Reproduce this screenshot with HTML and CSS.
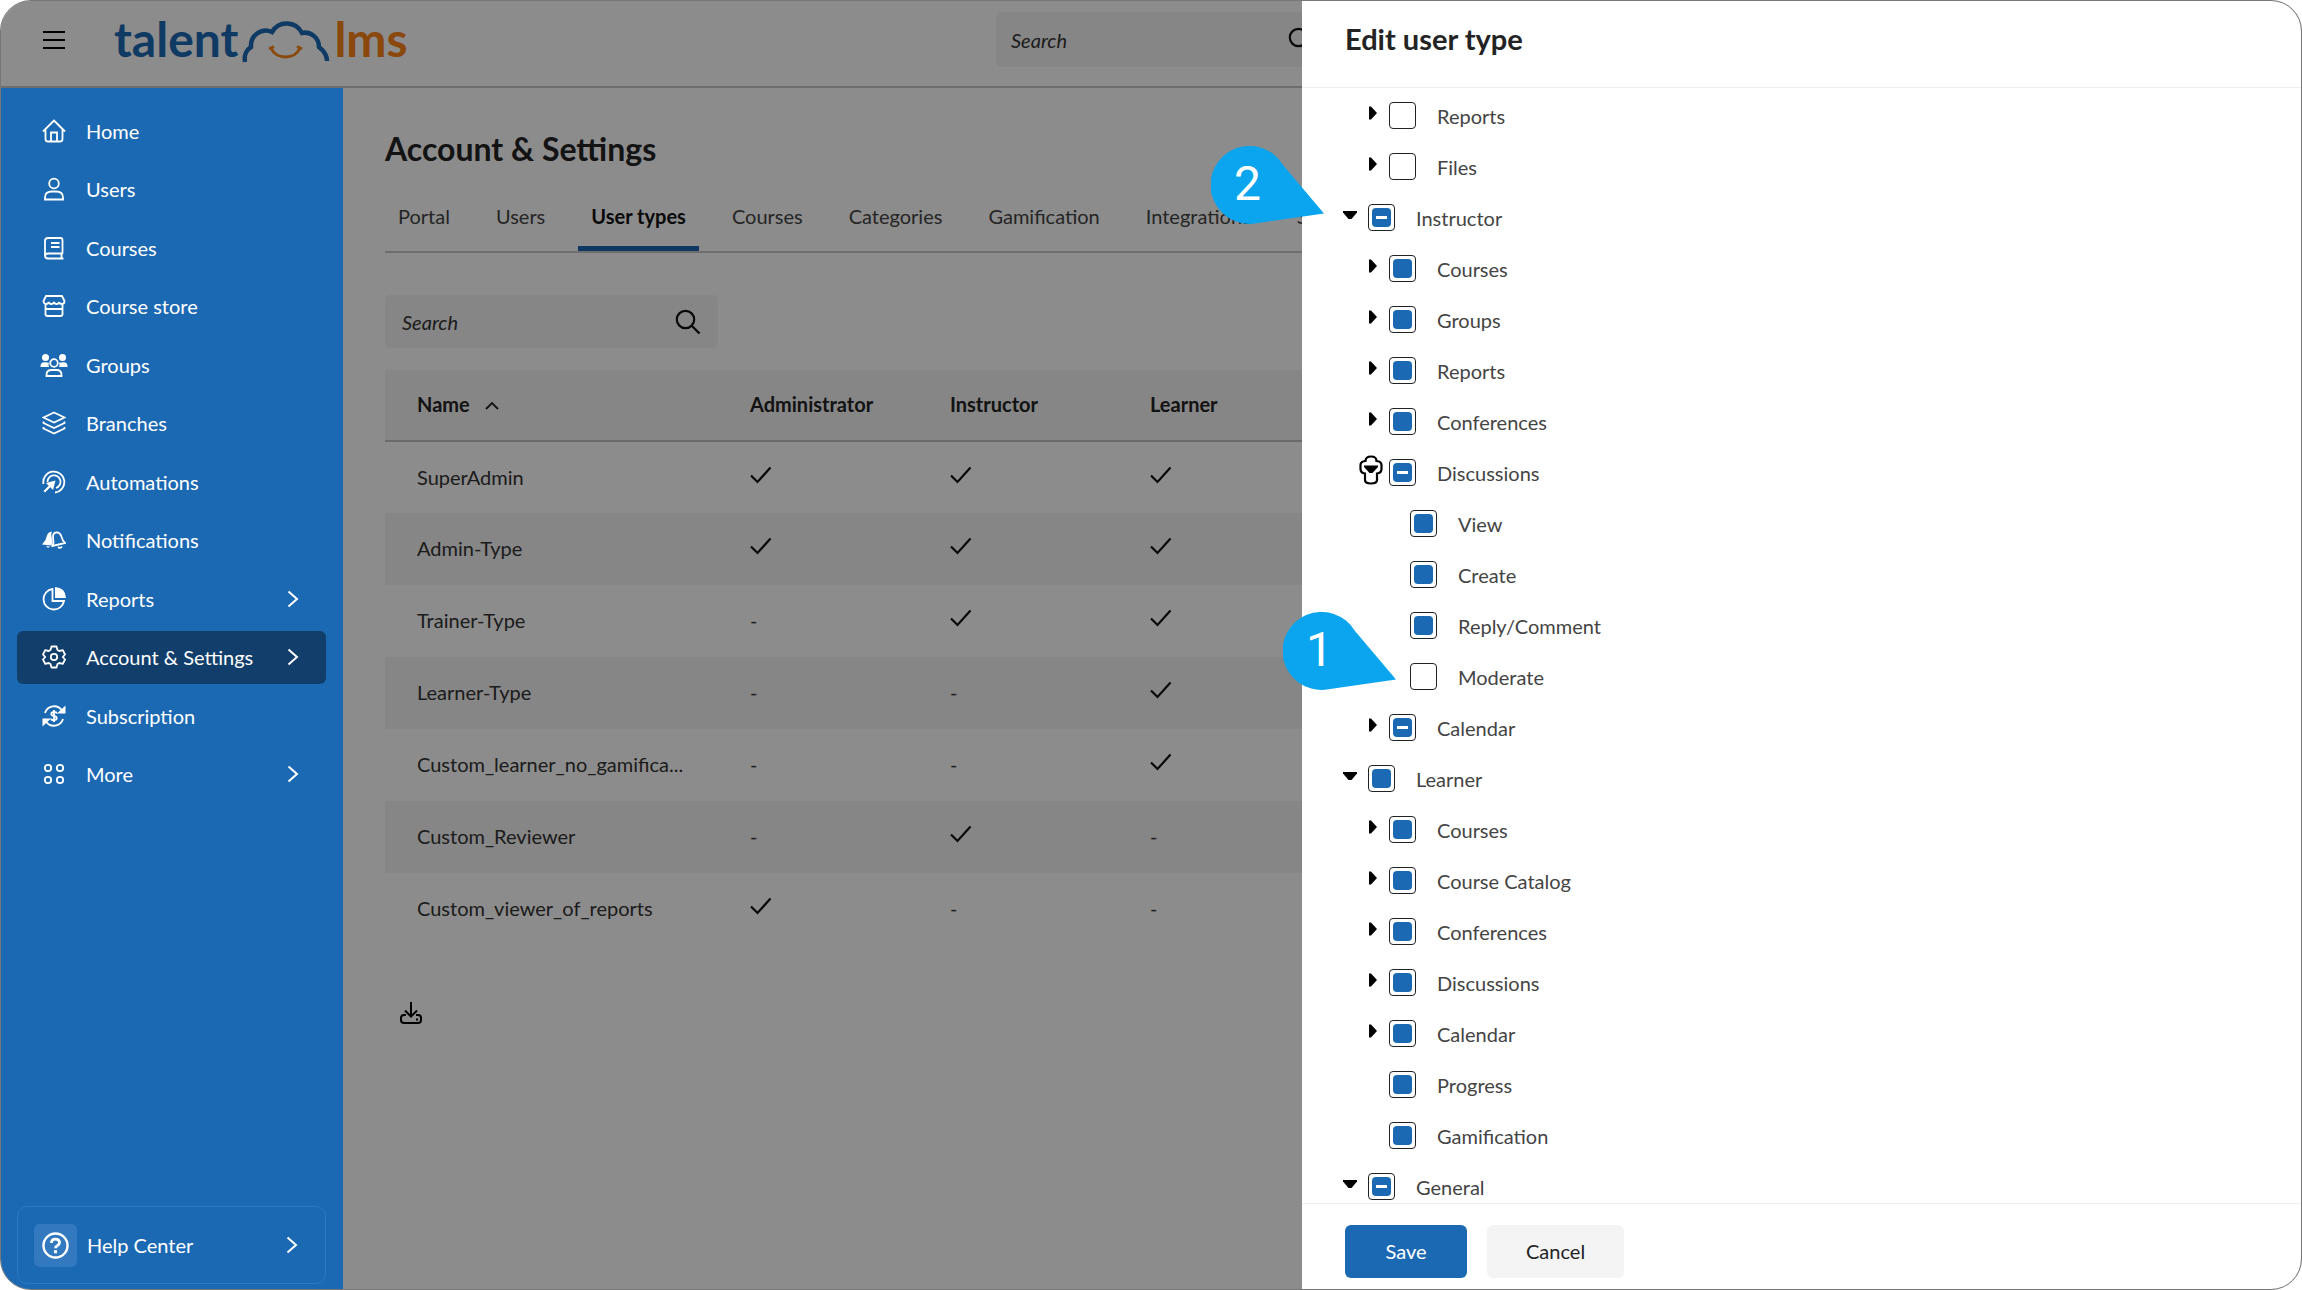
FILE: index.html
```html
<!DOCTYPE html>
<html lang="en">
<head>
    <meta charset="UTF-8">
    <meta name="viewport" content="width=device-width, initial-scale=1.0">
    <title>Account &amp; Settings - TalentLMS</title>
    <link rel="stylesheet" href="styles.css">
</head>
<body>
    <!-- Shared icons -->
    <svg class="sprite" aria-hidden="true">
        <symbol id="chevron" viewBox="0 0 12 18"><path d="M1.5 1.5 10 9l-8.500 7.500" fill="none" stroke="currentColor" stroke-width="2"/></symbol>
        <symbol id="check" viewBox="0 0 22 18"><path d="M1 9.500 7.500 16 20.500 1.500" fill="none" stroke="currentColor" stroke-width="2.200"/></symbol>
        <symbol id="search" viewBox="0 0 26 26"><circle cx="10.500" cy="10.500" r="8.700" fill="none" stroke="currentColor" stroke-width="2.200"/><path d="m17 17 7.500 7.500" stroke="currentColor" stroke-width="2.400"/></symbol>
        <symbol id="right" viewBox="0 0 14 14"><path d="M5 0.500h2L13 7l-6 6.500H5z" fill="currentColor"/></symbol>
        <symbol id="down" viewBox="0 0 14 14"><path d="M0 3h14v1.500L8.500 11h-3L0 4.500z" fill="currentColor"/></symbol>
        <symbol id="pin" viewBox="0 0 114 80"><path d="M72 19A39 39 0 1 0 42 77.800L113 67.500Z" fill="currentColor"/></symbol>
    </svg>

    <div class="app">
        <header class="topbar">
            <button class="menu-btn" aria-label="Menu">
                <svg width="22" height="20" viewBox="0 0 22 20"><path d="M0 2h22M0 10h22M0 18h22" stroke="currentColor" stroke-width="2.200"/></svg>
            </button>
            <a class="logo" href="#">
                <span>talent</span>
                <svg width="88" height="44" viewBox="0 0 88 44" fill="none">
                    <path d="M3 43C2 37 4 31 9 28C8 17 19 8 30 13C37 1 54 2 60 14C69 12 77 19 77 28C82 32 85 37 85 42" stroke="#1c6ab5" stroke-width="4.500"/>
                    <path d="M29 29C34 41 53 41 58 29M27 30l5-2.500M60 30l-5-2.500" stroke="#fb8319" stroke-width="3"/>
                </svg>
                <span class="logo-lms">lms</span>
            </a>
            <label class="search search-top">
                <input type="search" placeholder="Search" aria-label="Search the portal">
                <svg width="26" height="26"><use href="#search"/></svg>
            </label>
        </header>

        <div class="body">
            <aside class="sidebar">
                <nav>
                    <ul class="nav">
                        <li><a href="#">
                            <svg class="icon" viewBox="0 0 24 24"><path d="m1 12.500 11-11 11 11M3.500 10.500V20q0 2.500 2.500 2.500h12q2.500 0 2.500-2.500v-9.500M9 22v-8.500h6V22"/></svg>
                            Home</a></li>
                        <li><a href="#">
                            <svg class="icon" viewBox="0 0 24 24"><circle cx="12" cy="6.500" r="4.800"/><path d="M3 22.500v-2q0-6 7-6h4q7 0 7 6v2z"/></svg>
                            Users</a></li>
                        <li><a href="#">
                            <svg class="icon" viewBox="0 0 24 24"><path d="M20.500 17.500V4q0-2-2-2H6Q3 2 3 5v14.500q0 3 3 3h15.500M21 17.500H6q-3 0-3 2.500M19.500 17.500v5M9 7h8.500M9 11h8.500"/></svg>
                            Courses</a></li>
                        <li><a href="#">
                            <svg class="icon" viewBox="0 0 24 24"><path d="M4 2h16l2.500 5q0 3-2.600 3t-2.600-2q-.5 2-2.700 2t-2.600-2q-.5 2-2.700 2T6.700 8q-.5 2-2.700 2T1.500 7zM3.500 10v10q0 2 2 2h13q2 0 2-2V10M3.500 15h17"/></svg>
                            Course store</a></li>
                        <li><a href="#">
                            <svg class="icon icon-wide" viewBox="0 0 28 24"><circle class="solid" cx="5.500" cy="4.500" r="3.500"/><circle class="solid" cx="22.500" cy="4.500" r="3.500"/><path class="solid" d="M.5 14v-1q0-3.800 4-3.800 3 0 4.500.5-1 2 0 4.300zM27.500 14v-1q0-3.800-4-3.800-3 0-4.500.5 1 2 0 4.300z"/><circle cx="14" cy="10" r="3.800"/><path d="M6.500 23v-1q0-5 5-5h5q5 0 5 5v1z"/></svg>
                            Groups</a></li>
                        <li><a href="#">
                            <svg class="icon" viewBox="0 0 24 24"><path d="M12 1.500 22.500 6.500 12 11.500 1.500 6.500zM1.500 10.500v1.500L12 17l10.500-5v-1.500M1.500 16v1.500l10.500 5 10.500-5V16"/></svg>
                            Branches</a></li>
                        <li><a href="#">
                            <svg class="icon" viewBox="0 0 24 24"><path d="M1.500 14A10.500 10.500 0 1 1 13 22.500M5.500 12A6.500 6.500 0 1 1 14 18"/><path class="solid" d="M13.500 10.500 11 20l-2.700-2.700L3 22.500 1.500 21l5.200-5.300L4 13z"/></svg>
                            Automations</a></li>
                        <li><a href="#">
                            <svg class="icon" viewBox="0 0 24 24"><path class="solid" d="M10 3.500q-4 .5-5 4L3.500 12 0 16.500l9.500 1 1-3-1-6q-.5-3 .5-5zM4 18l4 .5q-2 2.500-4-.5z"/><path d="m10.500 18 1-3-.5-6q0-4 3-4.500 3.500-.5 5 3l2 5 2 2.500zM16 19q2 2 4-.5"/></svg>
                            Notifications</a></li>
                        <li><a href="#">
                            <svg class="icon" viewBox="0 0 24 24"><path d="M10.500 2A10.300 10.300 0 1 0 22 14H10.500z"/><path class="solid" d="M13 0Q23.500.5 24 11H13z"/></svg>
                            Reports
                            <svg class="chevron" width="12" height="18"><use href="#chevron"/></svg></a></li>
                        <li><a class="active" href="#">
                            <svg class="icon" viewBox="0 0 24 24"><path d="M9.500 1.500h5l1 3.500 1.800 1 3.500-.8 2.200 4.300L20.800 12l2.200 2.500-2.200 4.300-3.500-.8-1.800 1-1 3.500h-5l-1-3.500-1.800-1-3.500.8L1 14.500 3.200 12 1 9.500l2.200-4.300 3.500.8L8.500 5z" stroke-linejoin="round"/><circle cx="12" cy="12" r="3.200"/></svg>
                            Account &amp; Settings
                            <svg class="chevron" width="12" height="18"><use href="#chevron"/></svg></a></li>
                        <li><a href="#">
                            <svg class="icon" viewBox="0 0 24 24"><path d="M3 9A9.500 9.500 0 0 1 20 6.500M21 15A9.500 9.500 0 0 1 4 17.500M15 9.500q-.5-1.500-3-1.500T9.300 10q0 1.500 2.700 2t2.700 2.200-2.700 2-3-1.500M12 6v12"/><path class="solid" d="M23.500 1.500v8H15zM.5 22.500v-8H9z"/></svg>
                            Subscription</a></li>
                        <li><a href="#">
                            <svg class="icon" viewBox="0 0 24 24"><circle cx="6" cy="6" r="3.200"/><circle cx="18" cy="6" r="3.200"/><circle cx="6" cy="18" r="3.200"/><circle cx="18" cy="18" r="3.200"/></svg>
                            More
                            <svg class="chevron" width="12" height="18"><use href="#chevron"/></svg></a></li>
                    </ul>
                </nav>
                <a class="help" href="#">
                    <span class="help-icon">
                        <svg width="27" height="27" viewBox="0 0 27 27" fill="none" stroke="currentColor"><circle cx="13.500" cy="13.500" r="12" stroke-width="2.400"/><path d="M9.500 11q0-3.800 4-3.800t4 3.300q0 2-2 3-2 1-2 2.800" stroke-width="2.800"/><path d="M13.500 18.300v3" stroke-width="3"/></svg>
                    </span>
                    Help Center
                    <svg class="chevron" width="12" height="18"><use href="#chevron"/></svg>
                </a>
            </aside>

            <main class="content">
                <h1>Account &amp; Settings</h1>
                <nav class="tabs">
                    <a href="#">Portal</a>
                    <a href="#">Users</a>
                    <a class="active" href="#">User types</a>
                    <a href="#">Courses</a>
                    <a href="#">Categories</a>
                    <a href="#">Gamification</a>
                    <a href="#">Integrations</a>
                    <a href="#">Subscription</a>
                </nav>
                <label class="search">
                    <input type="search" placeholder="Search" aria-label="Search user types">
                    <svg width="26" height="26"><use href="#search"/></svg>
                </label>
                <table class="types">
                    <thead>
                        <tr>
                            <th class="col-name">Name <svg width="14" height="9" viewBox="0 0 14 9"><path d="m1 8 6-6 6 6" fill="none" stroke="currentColor" stroke-width="1.800"/></svg></th>
                            <th class="col-role">Administrator</th>
                            <th class="col-role">Instructor</th>
                            <th class="col-role">Learner</th>
                            <th></th>
                        </tr>
                    </thead>
                    <tbody>
                        <tr><td>SuperAdmin</td><td><svg class="check"><use href="#check"/></svg></td><td><svg class="check"><use href="#check"/></svg></td><td><svg class="check"><use href="#check"/></svg></td><td></td></tr>
                        <tr><td>Admin-Type</td><td><svg class="check"><use href="#check"/></svg></td><td><svg class="check"><use href="#check"/></svg></td><td><svg class="check"><use href="#check"/></svg></td><td></td></tr>
                        <tr><td>Trainer-Type</td><td>-</td><td><svg class="check"><use href="#check"/></svg></td><td><svg class="check"><use href="#check"/></svg></td><td></td></tr>
                        <tr><td>Learner-Type</td><td>-</td><td>-</td><td><svg class="check"><use href="#check"/></svg></td><td></td></tr>
                        <tr><td>Custom_learner_no_gamifica...</td><td>-</td><td>-</td><td><svg class="check"><use href="#check"/></svg></td><td></td></tr>
                        <tr><td>Custom_Reviewer</td><td>-</td><td><svg class="check"><use href="#check"/></svg></td><td>-</td><td></td></tr>
                        <tr><td>Custom_viewer_of_reports</td><td><svg class="check"><use href="#check"/></svg></td><td>-</td><td>-</td><td></td></tr>
                    </tbody>
                </table>
                <button class="download" aria-label="Download">
                    <svg width="22" height="22" viewBox="0 0 22 22" fill="none" stroke="currentColor" stroke-width="2"><path d="M11 0v14M5 8.500l6 6 6-6M6 13H4q-3 0-3 3v2q0 3 3 3h14q3 0 3-3v-2q0-3-3-3h-2M16 17.500h2"/></svg>
                </button>
            </main>
        </div>

        <div class="overlay"></div>

        <section class="drawer">
            <header class="drawer-head"><h2>Edit user type</h2></header>
            <div class="drawer-body">
                <ul class="tree">
                    <li>
                        <ul>
                            <li><div class="row"><button class="toggle" aria-label="Expand"><svg><use href="#right"/></svg></button><label><input type="checkbox">Reports</label></div></li>
                            <li><div class="row"><button class="toggle" aria-label="Expand"><svg><use href="#right"/></svg></button><label><input type="checkbox">Files</label></div></li>
                        </ul>
                    </li>
                    <li>
                        <div class="row"><button class="toggle" aria-label="Collapse"><svg><use href="#down"/></svg></button><label><input type="checkbox" class="partial">Instructor</label></div>
                        <ul>
                            <li><div class="row"><button class="toggle" aria-label="Expand"><svg><use href="#right"/></svg></button><label><input type="checkbox" checked>Courses</label></div></li>
                            <li><div class="row"><button class="toggle" aria-label="Expand"><svg><use href="#right"/></svg></button><label><input type="checkbox" checked>Groups</label></div></li>
                            <li><div class="row"><button class="toggle" aria-label="Expand"><svg><use href="#right"/></svg></button><label><input type="checkbox" checked>Reports</label></div></li>
                            <li><div class="row"><button class="toggle" aria-label="Expand"><svg><use href="#right"/></svg></button><label><input type="checkbox" checked>Conferences</label></div></li>
                            <li>
                                <div class="row"><button class="toggle focused" aria-label="Collapse"><svg viewBox="0 0 24 30"><path d="M6.500 6q0-4.500 5.500-4.500T17.500 6q5 .5 5 4v4q0 4-4.500 4.500V25q0 3.500-6 3.500T6 25v-6.500Q1.500 18 1.500 14v-4q0-3.500 5-4z" fill="none" stroke="currentColor" stroke-width="2.200"/><path d="M5 10.500h14v1.500L13.500 18h-3L5 12z" fill="currentColor"/></svg></button><label><input type="checkbox" class="partial">Discussions</label></div>
                                <ul>
                                    <li><div class="row leaf"><label><input type="checkbox" checked>View</label></div></li>
                                    <li><div class="row leaf"><label><input type="checkbox" checked>Create</label></div></li>
                                    <li><div class="row leaf"><label><input type="checkbox" checked>Reply/Comment</label></div></li>
                                    <li><div class="row leaf"><label><input type="checkbox">Moderate</label></div></li>
                                </ul>
                            </li>
                            <li><div class="row"><button class="toggle" aria-label="Expand"><svg><use href="#right"/></svg></button><label><input type="checkbox" class="partial">Calendar</label></div></li>
                        </ul>
                    </li>
                    <li>
                        <div class="row"><button class="toggle" aria-label="Collapse"><svg><use href="#down"/></svg></button><label><input type="checkbox" checked>Learner</label></div>
                        <ul>
                            <li><div class="row"><button class="toggle" aria-label="Expand"><svg><use href="#right"/></svg></button><label><input type="checkbox" checked>Courses</label></div></li>
                            <li><div class="row"><button class="toggle" aria-label="Expand"><svg><use href="#right"/></svg></button><label><input type="checkbox" checked>Course Catalog</label></div></li>
                            <li><div class="row"><button class="toggle" aria-label="Expand"><svg><use href="#right"/></svg></button><label><input type="checkbox" checked>Conferences</label></div></li>
                            <li><div class="row"><button class="toggle" aria-label="Expand"><svg><use href="#right"/></svg></button><label><input type="checkbox" checked>Discussions</label></div></li>
                            <li><div class="row"><button class="toggle" aria-label="Expand"><svg><use href="#right"/></svg></button><label><input type="checkbox" checked>Calendar</label></div></li>
                            <li><div class="row leaf"><label><input type="checkbox" checked>Progress</label></div></li>
                            <li><div class="row leaf"><label><input type="checkbox" checked>Gamification</label></div></li>
                        </ul>
                    </li>
                    <li><div class="row"><button class="toggle" aria-label="Collapse"><svg><use href="#down"/></svg></button><label><input type="checkbox" class="partial">General</label></div></li>
                </ul>
            </div>
            <footer class="drawer-foot">
                <button class="btn btn-primary">Save</button>
                <button class="btn">Cancel</button>
            </footer>

            <div class="callout callout-two"><svg><use href="#pin"/></svg><span>2</span></div>
            <div class="callout callout-one"><svg><use href="#pin"/></svg><span>1</span></div>
        </section>
    </div>

    <script>
        // "Partly selected" can only be set from script
        document.querySelectorAll(".partial").forEach(function (box) {
            box.indeterminate = true;
        });
    </script>
</body>
</html>
```
FILE: styles.css
```css
* { box-sizing: border-box; }
body { margin: 0; background: #fff; color: #232323; font-family: Lato, sans-serif; font-size: 20px; line-height: 24px; }
a { color: inherit; text-decoration: none; }
ul { list-style: none; margin: 0; padding: 0; }
h1, h2 { margin: 0; font-weight: bold; }
button { font: inherit; color: inherit; background: none; border: 0; padding: 0; cursor: pointer; }
.sprite { position: absolute; width: 0; height: 0; }

.app { position: relative; display: flex; flex-direction: column; height: 100vh; border: 1px solid #777; border-radius: 31px; overflow: hidden; }
.body { flex: 1; display: flex; min-height: 0; }
.overlay { position: absolute; inset: 0; background: rgba(0, 0, 0, 0.45); }

/* Top bar */
.topbar { display: flex; align-items: center; height: 87px; padding: 0 42px; border-bottom: 2px solid #c8c8c8; }
.menu-btn { display: flex; color: #000; margin-bottom: 8px; }
.logo { display: flex; align-items: flex-end; gap: 4px; margin: 0 auto 10px 49px; color: #1c6ab5; font-weight: bold; font-size: 48px; line-height: 48px; }
.logo-lms { color: #fb8319; }
.search { display: flex; align-items: center; width: 333px; height: 53px; padding: 0 17px; background: #f4f4f4; border-radius: 5px; color: #111; }
.search input { flex: 1; min-width: 0; border: 0; outline: 0; padding: 0; background: none; font: inherit; }
.search input::placeholder { color: #333; font-style: italic; opacity: 1; }
.search-top { margin: 0 930px 8px 0; height: 55px; padding: 0 15px; }

/* Sidebar */
.sidebar { position: relative; z-index: 1; display: flex; flex-direction: column; justify-content: space-between; width: 342px; padding: 16px 17px 5px 16px; background: #1c69b3; color: #fff; }
.nav { display: flex; flex-direction: column; justify-content: space-between; min-height: 697px; }
.nav a { display: flex; align-items: center; height: 53px; padding: 0 27px 0 25px; border-radius: 6px; }
.nav a.active { background: #113e6a; }
.icon { width: 24px; height: 24px; margin-right: 20px; fill: none; stroke: currentColor; stroke-width: 1.8; }
.icon-wide { width: 28px; margin: 0 18px 0 -2px; }
.icon .solid { fill: currentColor; stroke: none; }
.chevron { margin-left: auto; }
.help { display: flex; align-items: center; height: 78px; padding: 0 27px 0 16px; border: 1px solid #3078bd; border-radius: 10px; }
.help-icon { display: flex; align-items: center; justify-content: center; width: 43px; height: 43px; margin-right: 10px; background: #3379c0; border-radius: 6px; }

/* Content */
.content { flex: 1; min-width: 0; padding: 43px 42px; }
h1 { font-size: 32px; line-height: 36px; }
.tabs { display: flex; gap: 20px; margin: 18px 0 42px; border-bottom: 2px solid #c3cdcb; color: #444; }
.tabs a { padding: 19px 13px 18px; border-bottom: 5px solid transparent; }
.tabs a.active { border-color: #1c69b3; color: #111; font-weight: bold; }
.types { width: 100%; margin-top: 22px; border-collapse: collapse; table-layout: fixed; text-align: left; }
.types th { height: 71px; padding: 0 32px 2px; background: #f4f4f4; border-bottom: 2px solid #c3c3c3; }
.types th svg { margin-left: 10px; vertical-align: 2px; }
.types td { height: 72px; padding: 0 32px 2px; color: #333; white-space: nowrap; }
.types tbody tr:nth-child(even) { background: #f4f4f4; }
.col-name { width: 333px; }
.col-role { width: 200px; }
.check { display: block; width: 22px; height: 18px; margin-bottom: 4px; color: #111; }
.download { display: flex; margin: 57px 15px; color: #000; }

/* Drawer */
.drawer { position: absolute; top: 0; right: 0; bottom: 0; width: 999px; display: flex; flex-direction: column; background: #fff; border-radius: 0 30px 30px 0; }
.drawer-head { height: 87px; padding: 21px 43px; border-bottom: 1px solid #eee; }
h2 { font-size: 29px; line-height: 34px; }
.drawer-body { flex: 1; min-height: 0; overflow: hidden; padding: 2px 34px; }
.tree ul { padding-left: 21px; }
.row { display: flex; align-items: center; height: 51px; color: #444; }
.row.leaf { padding-left: 32px; }
.row label { display: flex; align-items: center; gap: 21px; }
.row input { position: relative; appearance: none; width: 27px; height: 27px; margin: 0; border: 1px solid #222; border-radius: 4px; background: #fff; }
.row input:checked::before, .row input:indeterminate::before { content: ""; position: absolute; inset: 3px; border-radius: 4px; background: #1c69b3; }
.row input:indeterminate::after { content: ""; position: absolute; top: 11px; left: 7px; width: 11px; height: 3px; background: #fff; }
.toggle { display: flex; justify-content: center; width: 28px; margin: 0 4px 5px 0; color: #000; }
.toggle svg { width: 14px; height: 14px; }
.toggle.focused svg { width: 24px; height: 30px; }
.drawer-foot { display: flex; gap: 20px; padding: 21px 43px 11px; border-top: 1px solid #eee; }
.btn { min-width: 122px; height: 53px; padding: 0 39px 2px; border-radius: 6px; background: #f4f4f4; }
.btn-primary { background: #1c69b3; color: #fff; }

/* Step markers */
.callout { position: absolute; width: 114px; height: 80px; color: #0aa5ee; }
.callout svg { display: block; width: 100%; height: 100%; }
.callout span { position: absolute; top: 10px; left: 23px; color: #fff; font-family: Roboto, sans-serif; font-size: 48px; line-height: 56px; }
.callout-two { top: 145px; left: -91px; }
.callout-one { top: 611px; left: -19px; }
```
